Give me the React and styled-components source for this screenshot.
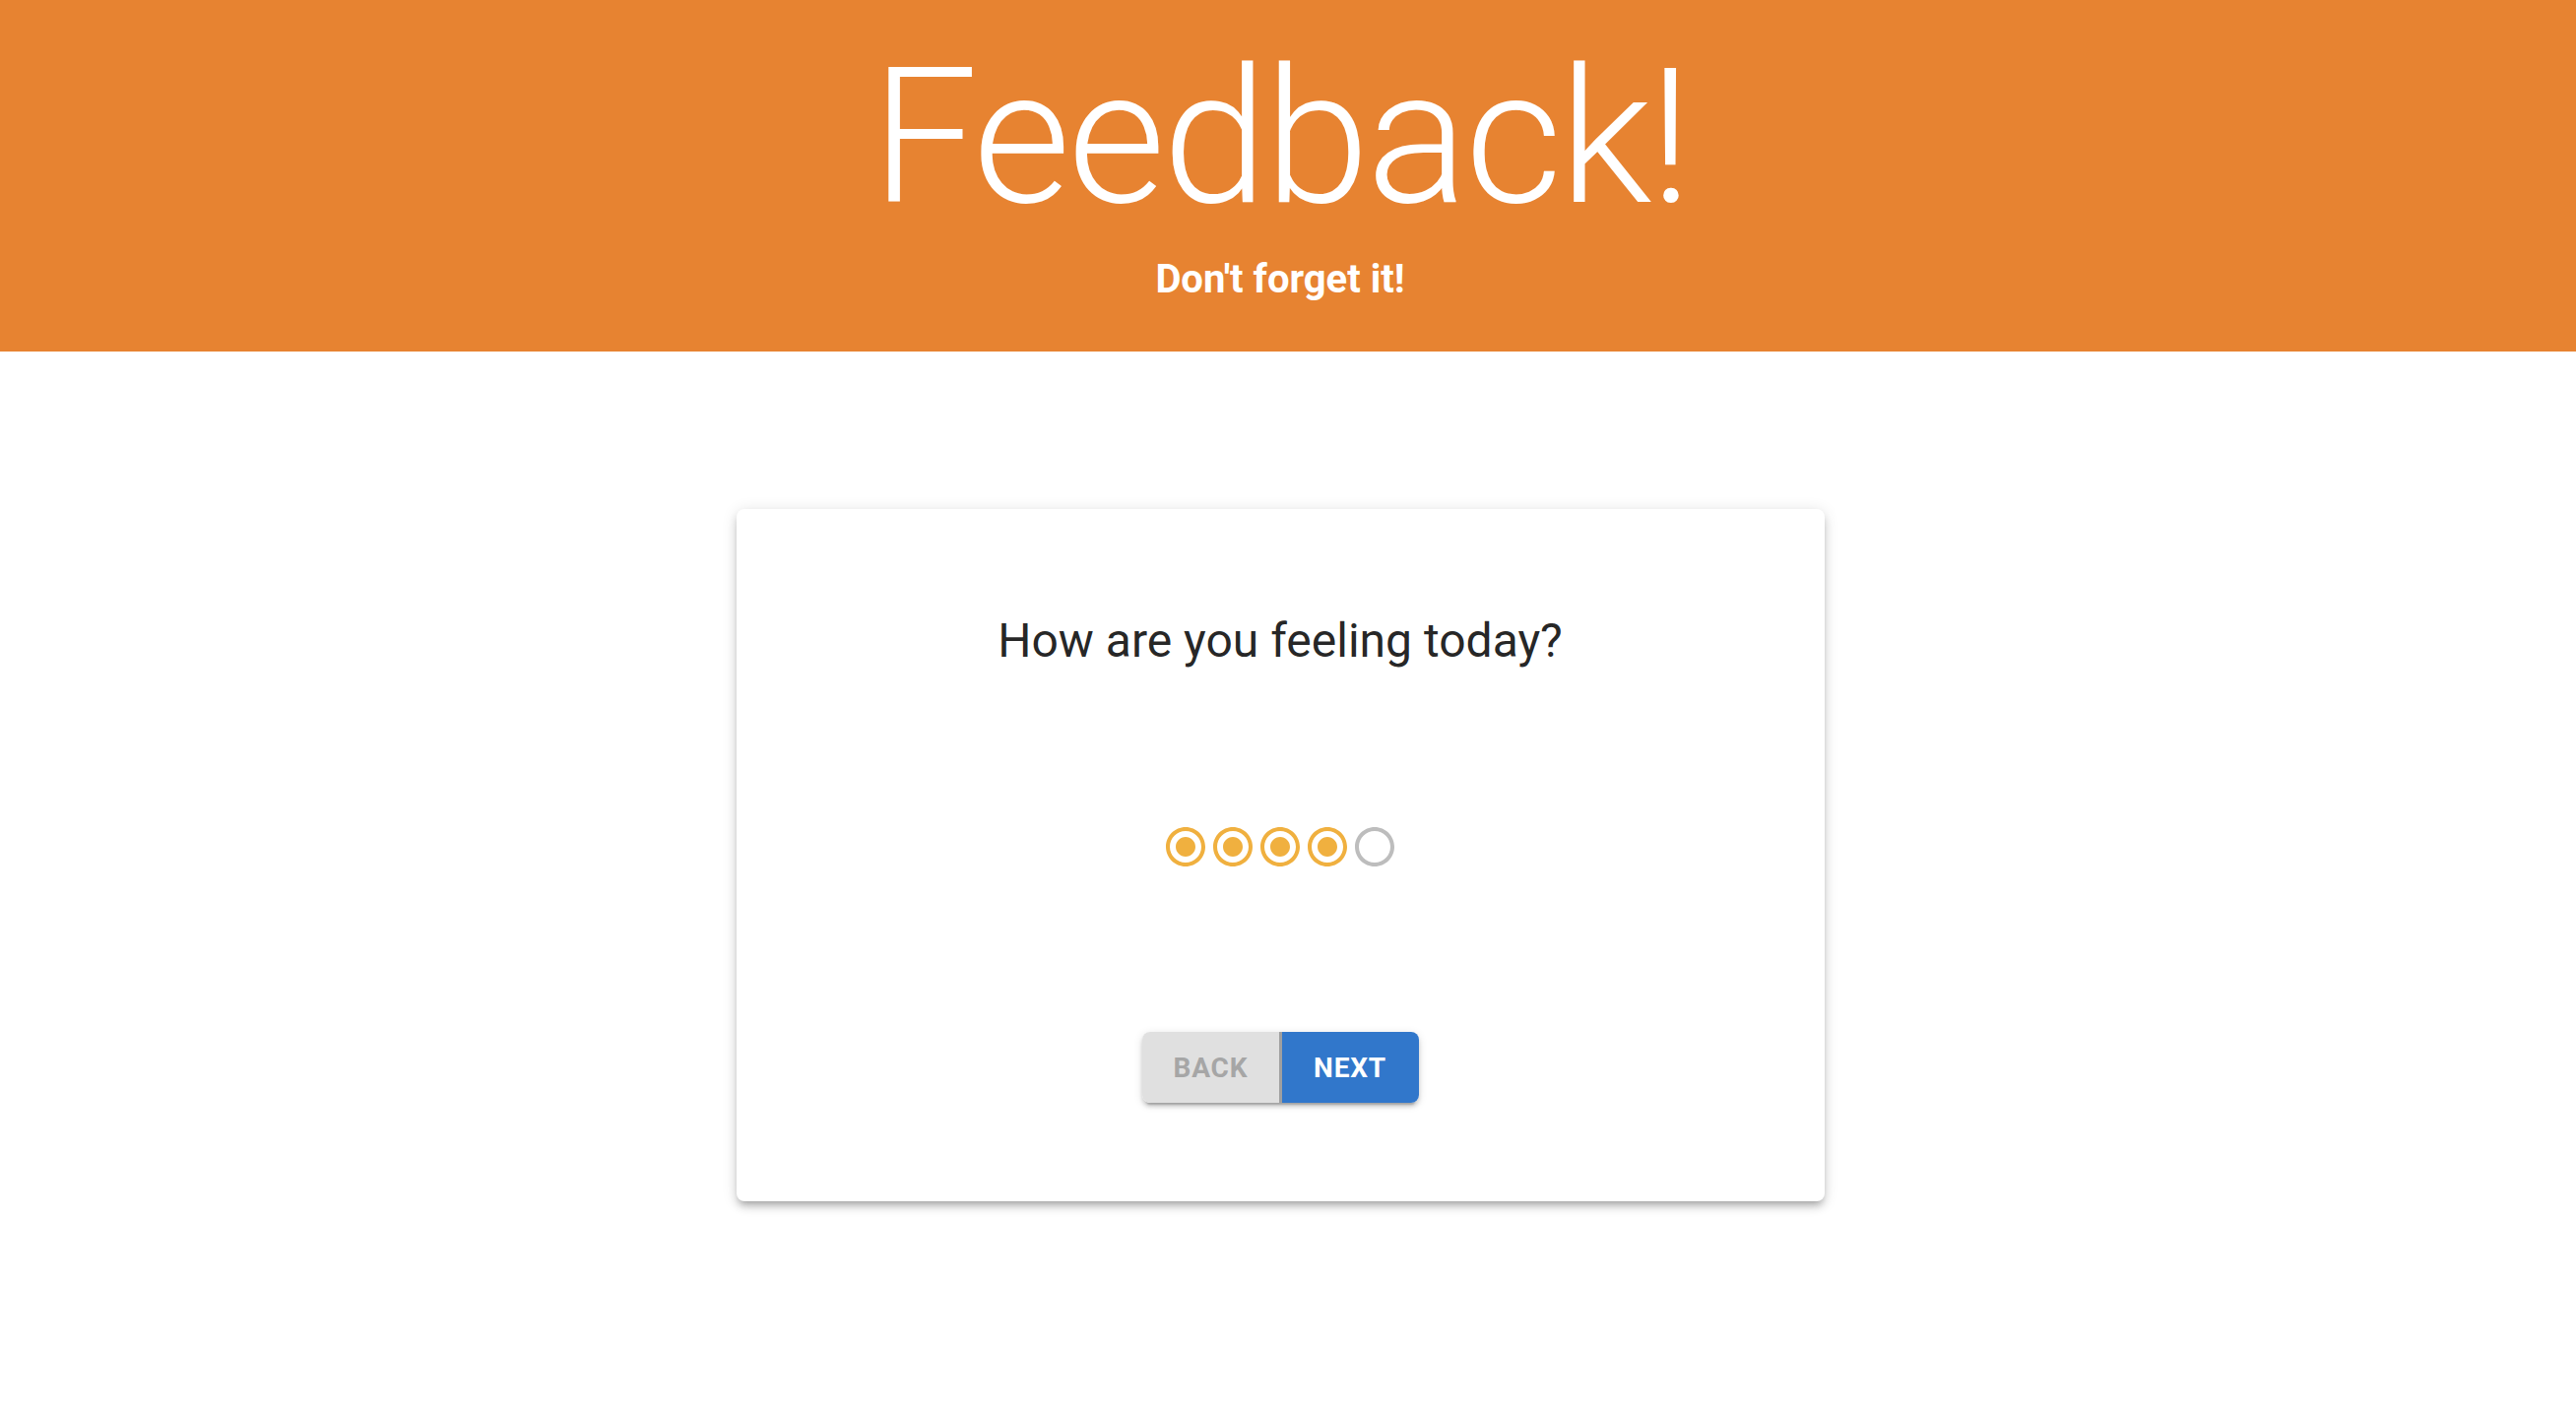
import styled, { createGlobalStyle } from "styled-components";

const GlobalStyle = createGlobalStyle`
	body {
		margin: 0;
		background: #fff;
		font-family: Roboto, "Liberation Sans", sans-serif;
	}
`;

const RATING = 4;
const MAX = 5;

const RadioIcon = ({ checked }) => (
	<svg viewBox="0 0 24 24" width="48" height="48" fill="currentColor">
		{checked ? (
			<path d="M12 7c-2.76 0-5 2.24-5 5s2.24 5 5 5 5-2.24 5-5-2.24-5-5-5zm0-5C6.48 2 2 6.48 2 12s4.48 10 10 10 10-4.48 10-10S17.52 2 12 2zm0 18c-4.42 0-8-3.58-8-8s3.58-8 8-8 8 3.58 8 8-3.58 8-8 8z" />
		) : (
			<path d="M12 2C6.48 2 2 6.48 2 12s4.48 10 10 10 10-4.48 10-10S17.52 2 12 2zm0 18c-4.42 0-8-3.58-8-8s3.58-8 8-8 8 3.58 8 8-3.58 8-8 8z" />
		)}
	</svg>
);

const App = () => {
	return (
		<Page>
			<GlobalStyle />
			<Header>
				<Title>Feedback!</Title>
				<Subtitle>Don't forget it!</Subtitle>
			</Header>
			<Main>
				<Card>
					<Question>How are you feeling today?</Question>
					<Rating>
						{Array.from({ length: MAX }, (_, i) => (
							<Star key={i} $active={i < RATING}>
								<RadioIcon checked={i < RATING} />
							</Star>
						))}
					</Rating>
					<ButtonGroup>
						<GroupButton disabled>Back</GroupButton>
						<GroupButton $primary>Next</GroupButton>
					</ButtonGroup>
				</Card>
			</Main>
		</Page>
	);
};

const Page = styled.div`
	min-height: 100vh;
	display: flex;
	flex-direction: column;
`;

const Header = styled.header`
	background-color: #e78331;
	color: #fff;
	padding: 28px 16px 41px 0;
	display: flex;
	flex-direction: column;
	align-items: center;
`;

const Title = styled.h1`
	margin: 0;
	font-size: 192px;
	font-weight: 300;
	line-height: 224px;
	letter-spacing: -3px;
`;

const Subtitle = styled.h6`
	margin: 0;
	font-size: 40px;
	font-weight: 700;
	line-height: 64px;
`;

const Main = styled.main`
	display: flex;
	justify-content: center;
	padding: 160px 16px 0 0;
`;

const Card = styled.div`
	width: 1105px;
	box-sizing: border-box;
	padding: 102px 0 100px;
	background: #fff;
	border-radius: 8px;
	box-shadow: 0 6px 6px -4px rgba(0, 0, 0, 0.2), 0 6px 8px 0 rgba(0, 0, 0, 0.14),
		0 2px 16px 0 rgba(0, 0, 0, 0.12);
	display: flex;
	flex-direction: column;
	align-items: center;
`;

const Question = styled.h5`
	margin: 0;
	font-size: 48px;
	font-weight: 400;
	line-height: 64px;
	color: rgba(0, 0, 0, 0.87);
`;

const Rating = styled.div`
	display: flex;
	margin-top: 153px;
`;

const Star = styled.span`
	display: flex;
	color: ${(p) => (p.$active ? "#f0b03f" : "#bdbdbd")};
`;

const ButtonGroup = styled.div`
	display: flex;
	margin-top: 164px;
	border-radius: 8px;
	box-shadow: 0 6px 2px -4px rgba(0, 0, 0, 0.2), 0 4px 4px 0 rgba(0, 0, 0, 0.14),
		0 2px 10px 0 rgba(0, 0, 0, 0.12);
`;

const GroupButton = styled.button`
	border: none;
	height: 72px;
	padding: 0 32px;
	min-width: 128px;
	font-family: Roboto, "Liberation Sans", sans-serif;
	font-size: 28px;
	font-weight: 700;
	letter-spacing: 0.8px;
	text-transform: uppercase;
	cursor: pointer;
	background-color: ${(p) => (p.$primary ? "#3177cb" : "#e0e0e0")};
	color: ${(p) => (p.$primary ? "#fff" : "#a6a6a6")};

	&:first-child {
		width: 142px;
		border-radius: 8px 0 0 8px;
		border-right: 3px solid #a0a0a0;
	}

	&:last-child {
		width: 139px;
		border-radius: 0 8px 8px 0;
	}

	&:disabled {
		cursor: default;
	}
`;

export default App;
